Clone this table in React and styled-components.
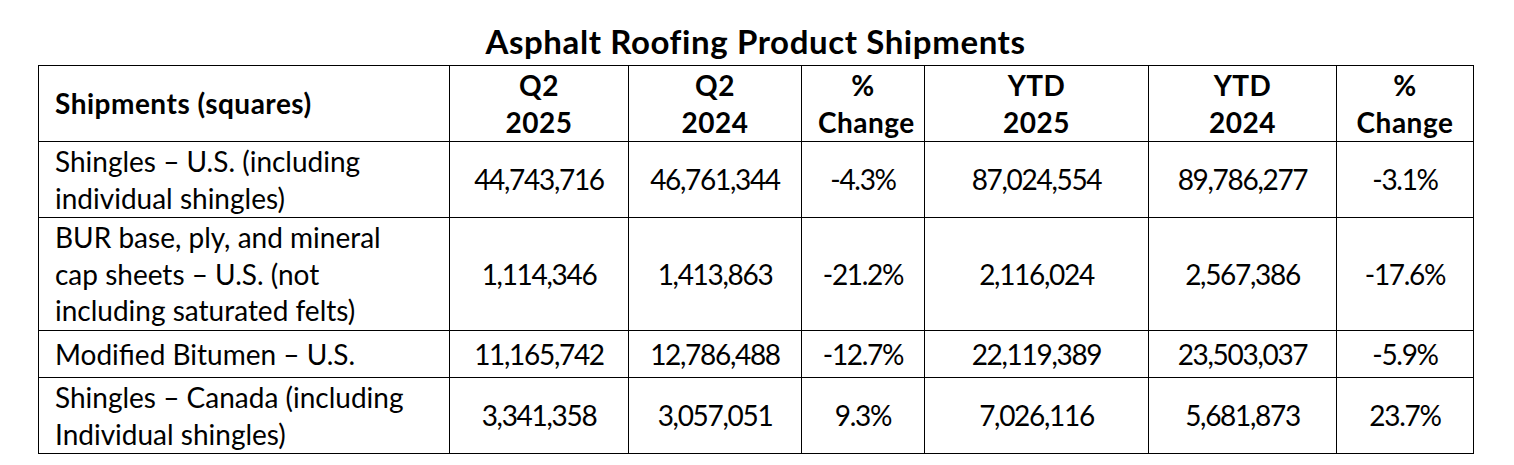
import styled, { createGlobalStyle } from "styled-components";

const GlobalStyle = createGlobalStyle`
  body {
    margin: 0;
    background: #fff;
    font-family: Lato, "Liberation Sans", sans-serif;
    color: #000;
  }
`;

const Page = styled.div`
  padding: 0 0 0 38px;
  width: 1435px;
`;

const Title = styled.h1`
  margin: 0;
  height: 65px;
  padding-top: 23px;
  box-sizing: border-box;
  font-size: 33px;
  line-height: 36px;
  font-weight: 700;
  letter-spacing: 0.6px;
  text-align: center;
`;

const Table = styled.table`
  border-collapse: collapse;
  table-layout: fixed;
  width: 1435px;
  font-size: 28px;
  line-height: 36.5px;
`;

const Row = styled.tr`
  height: ${(p) => p.$h}px;
`;

const HeadCell = styled.th`
  border: 1px solid #000;
  padding: 0 16px;
  font-weight: 700;
  letter-spacing: 0.5px;
  text-align: ${(p) => (p.$left ? "left" : "center")};
  vertical-align: middle;
`;

const Cell = styled.td`
  border: 1px solid #000;
  padding: 0 16px;
  letter-spacing: ${(p) => (p.$left ? "0" : "-1.3px")};
  text-align: ${(p) => (p.$left ? "left" : "center")};
  vertical-align: middle;
`;

const widths = [411, 179, 173, 123, 224, 188, 137];

const headers = [
  ["Q2", "2025"],
  ["Q2", "2024"],
  ["%", "Change"],
  ["YTD", "2025"],
  ["YTD", "2024"],
  ["%", "Change"],
];

const rows = [
  {
    h: 76,
    label: ["Shingles – U.S. (including", "individual shingles)"],
    values: ["44,743,716", "46,761,344", "-4.3%", "87,024,554", "89,786,277", "-3.1%"],
  },
  {
    h: 113,
    label: ["BUR base, ply, and mineral", "cap sheets – U.S. (not", "including saturated felts)"],
    values: ["1,114,346", "1,413,863", "-21.2%", "2,116,024", "2,567,386", "-17.6%"],
  },
  {
    h: 47,
    label: ["Modified Bitumen – U.S."],
    values: ["11,165,742", "12,786,488", "-12.7%", "22,119,389", "23,503,037", "-5.9%"],
  },
  {
    h: 76,
    label: ["Shingles – Canada (including", "Individual shingles)"],
    values: ["3,341,358", "3,057,051", "9.3%", "7,026,116", "5,681,873", "23.7%"],
  },
];

function Lines({ items }) {
  return items.map((t, i) => (
    <span key={i}>
      {i > 0 && <br />}
      {t}
    </span>
  ));
}

export default function App() {
  return (
    <>
      <GlobalStyle />
      <Page>
        <Title>Asphalt Roofing Product Shipments</Title>
        <Table>
          <colgroup>
            {widths.map((w, i) => (
              <col key={i} style={{ width: w }} />
            ))}
          </colgroup>
          <thead>
            <Row $h={76}>
              <HeadCell $left>Shipments (squares)</HeadCell>
              {headers.map((h, i) => (
                <HeadCell key={i}>
                  <Lines items={h} />
                </HeadCell>
              ))}
            </Row>
          </thead>
          <tbody>
            {rows.map((r, i) => (
              <Row key={i} $h={r.h}>
                <Cell $left>
                  <Lines items={r.label} />
                </Cell>
                {r.values.map((v, j) => (
                  <Cell key={j}>{v}</Cell>
                ))}
              </Row>
            ))}
          </tbody>
        </Table>
      </Page>
    </>
  );
}
